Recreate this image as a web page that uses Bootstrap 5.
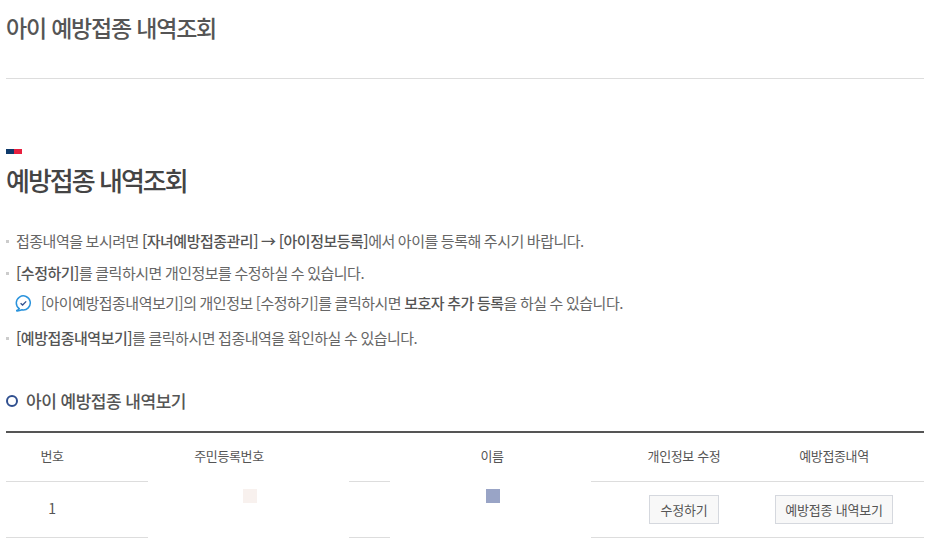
<!DOCTYPE html>
<html lang="ko">
<head>
  <meta charset="UTF-8" />
  <title>아이 예방접종 내역조회</title>
  <link href="https://cdn.jsdelivr.net/npm/bootstrap@5.3.0/dist/css/bootstrap.min.css" rel="stylesheet" />
  <style>
    body { font-family: "Noto Sans CJK KR", "Liberation Sans", sans-serif; color: #555; background: #fff; overflow: hidden; }
    .page-wrap { padding: 0 11px 0 6px; }
    .page-head { height: 79px; border-bottom: 1px solid #ddd; padding-top: 9px; }
    .page-head h1 { font-size: 23px; font-weight: 500; letter-spacing: -1.2px; line-height: 36px; color: #555; margin: 0; }
    .flag-mark { width: 16px; height: 5px; margin-top: 70px; background: linear-gradient(90deg, #0f3a6b 50%, #e8203f 50%); }
    .sec-title { font-size: 26px; font-weight: 500; letter-spacing: -2px; line-height: 38px; color: #444; margin: 7px 0 0; }
    .guide-list { list-style: none; padding: 0; margin: 30px 0 0; font-size: 15px; letter-spacing: -.5px; word-spacing: -.6px; line-height: 24px; color: #666; }
    .guide-list li { position: relative; padding-left: 10px; margin-bottom: 9px; }
    .guide-list li:first-child { margin-bottom: 8px; }
    .guide-list li::before { content: ""; position: absolute; left: 0; top: 11px; width: 3px; height: 3px; background: #ccc; }
    .guide-list b { font-weight: 500; color: #555; }
    .guide-list li.guide-sub { padding-left: 9px; margin: -3px 0 11px; display: flex; align-items: center; gap: 9px; }
    .guide-list li.guide-sub::before { display: none; }
    .sub-title { font-size: 17px; font-weight: 500; letter-spacing: -.5px; line-height: 24px; color: #555; margin: 39px 0 18px; }
    .ring-dot { width: 12px; height: 12px; border: 2px solid #2f4f8f; border-radius: 50%; }
    .vac-table { table-layout: fixed; width: 100%; border-collapse: collapse; border-top: 2px solid #555; font-size: 13px; letter-spacing: -.35px; text-align: center; margin: 0; }
    .vac-table th { font-weight: 400; height: 49px; border-bottom: 1px solid #ddd; color: #555; vertical-align: middle; padding: 0 0 2px; }
    .vac-table td { height: 56px; border-bottom: 1px solid #ddd; color: #555; vertical-align: middle; padding: 0; position: relative; font-size: 14px; }
    .vac-table td.num-cell { padding-bottom: 2px; }
    .blot-cover { position: absolute; top: -2px; bottom: -2px; width: 201px; background: #fff; }
    .blot-dot { position: absolute; top: 7px; width: 14px; height: 14px; }
    .row-btn { width: 70px; font-size: 13px; letter-spacing: -.2px; line-height: 17px; color: #555; background: #f8f8f8; border: 1px solid #d5d8de; border-radius: 0; padding: 5px 0; }
    .row-btn-wide { width: 118px; }
  </style>
</head>
<body>

<div class="page-wrap">
  <div class="page-head">
    <h1>아이 예방접종 내역조회</h1>
  </div>

  <div class="flag-mark"></div>
  <h2 class="sec-title">예방접종 내역조회</h2>

  <ul class="guide-list">
    <li>접종내역을 보시려면 <b>[자녀예방접종관리] → [아이정보등록]</b>에서 아이를 등록해 주시기 바랍니다.</li>
    <li><b>[수정하기]</b>를 클릭하시면 개인정보를 수정하실 수 있습니다.</li>
    <li class="guide-sub">
      <svg width="17" height="17" viewBox="0 0 17 17" fill="none" stroke="#2a93dc" stroke-width="1.5">
        <path d="M4.2 13.6 A7 7 0 1 1 7 14.8 Q4 16.2 1.2 15.8 Q3.6 15 4.2 13.6 Z" />
        <path d="M5.6 8.2 L7.6 10 L11.2 6.4" stroke="#2f4f8f" stroke-width="1.3" />
      </svg>
      <span>[아이예방접종내역보기]의 개인정보 [수정하기]를 클릭하시면 <b>보호자 추가 등록</b>을 하실 수 있습니다.</span>
    </li>
    <li><b>[예방접종내역보기]</b>를 클릭하시면 접종내역을 확인하실 수 있습니다.</li>
  </ul>

  <h3 class="sub-title d-flex align-items-center gap-2"><span class="ring-dot"></span>아이 예방접종 내역보기</h3>

  <table class="vac-table">
    <colgroup>
      <col style="width: 92px" /><col style="width: 262px" /><col style="width: 264px" /><col style="width: 120px" /><col style="width: 180px" />
    </colgroup>
    <thead>
      <tr><th>번호</th><th>주민등록번호</th><th>이름</th><th>개인정보 수정</th><th>예방접종내역</th></tr>
    </thead>
    <tbody>
      <tr>
        <td class="num-cell">1</td>
        <td><span class="blot-cover" style="left: 50px"></span><span class="blot-dot" style="left: 145px; background: #f8f1ee"></span></td>
        <td><span class="blot-cover" style="left: 30px"></span><span class="blot-dot" style="left: 126px; background: #99a4c6"></span></td>
        <td><button type="button" class="btn row-btn">수정하기</button></td>
        <td><button type="button" class="btn row-btn row-btn-wide">예방접종 내역보기</button></td>
      </tr>
    </tbody>
  </table>
</div>

<script src="https://cdn.jsdelivr.net/npm/bootstrap@5.3.0/dist/js/bootstrap.bundle.min.js"></script>
</body>
</html>
